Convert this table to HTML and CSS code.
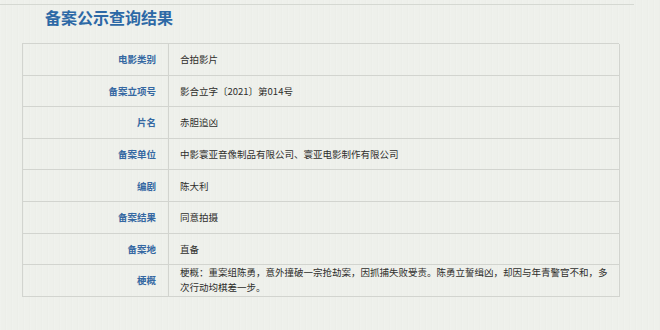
FILE: index.html
```html
<!DOCTYPE html>
<html lang="zh">
<head>
<meta charset="utf-8">
<title>备案公示查询结果</title>
<link rel="stylesheet" href="styles.css">
</head>
<body>
<div class="page">
  <div class="topline"></div>
  <h1 class="title">备案公示查询结果</h1>
  <div class="record">
    <div class="label">电影类别</div><div class="value">合拍影片</div>
    <div class="label">备案立项号</div><div class="value">影合立字〔2021〕第014号</div>
    <div class="label">片名</div><div class="value">赤胆追凶</div>
    <div class="label">备案单位</div><div class="value">中影寰亚音像制品有限公司、寰亚电影制作有限公司</div>
    <div class="label">编剧</div><div class="value">陈大利</div>
    <div class="label">备案结果</div><div class="value">同意拍摄</div>
    <div class="label">备案地</div><div class="value">直备</div>
    <div class="label">梗概</div><div class="value multi">梗概：重案组陈勇，意外撞破一宗抢劫案，因抓捕失败受责。陈勇立誓缉凶，却因与年青警官不和，多次行动均棋差一步。</div>
  </div>
</div>
</body>
</html>
```

FILE: styles.css
```css
html, body {
  margin: 0;
  padding: 0;
}
body {
  width: 660px;
  height: 330px;
  overflow: hidden;
  background-color: #eef0eb;
  background-image: repeating-linear-gradient(90deg, rgba(255,255,255,0.10) 0 1px, rgba(0,0,0,0) 1px 5px, rgba(210,214,206,0.08) 5px 6px);
  font-family: "Noto Sans CJK SC", sans-serif;
}
.page {
  padding-top: 4px;
}
.topline {
  width: 634px;
  height: 1px;
  background: #d5d8d2;
}
.title {
  margin: 0 0 14px 45px;
  font-size: 16px;
  line-height: 24px;
  font-weight: bold;
  color: #2d69a6;
}
.record {
  margin-left: 22px;
  width: 597px;
  display: grid;
  grid-template-columns: 146px 451px;
  grid-auto-rows: 31.6px;
  border-top: 1px solid #d2d4cf;
  border-left: 1px solid #d2d4cf;
  box-sizing: border-box;
}
.label, .value {
  border-right: 1px solid #d2d4cf;
  border-bottom: 1px solid #d2d4cf;
  display: flex;
  align-items: center;
  font-size: 9.5px;
}
.label {
  justify-content: flex-end;
  padding-right: 12px;
  color: #3568a2;
  font-weight: bold;
}
.value {
  padding: 0 8px 0 11px;
  color: #2e2e2c;
}
.multi {
  line-height: 15.5px;
}
```
